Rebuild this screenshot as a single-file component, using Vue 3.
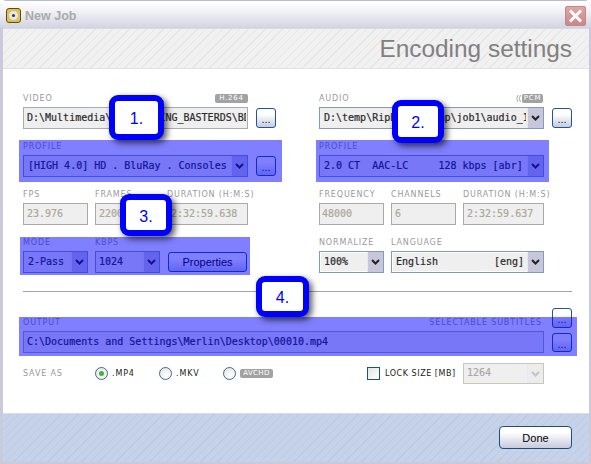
<script setup>
const chevron = 'M1 1 L4.5 4.5 L8 1'
const audioProfile = '2.0 CT  AAC-LC     128 kbps [abr]'
</script>

<template>
  <div class="window">
    <header class="titlebar">
      <svg class="app-icon" width="15" height="15" viewBox="0 0 15 15">
        <rect x="0.5" y="0.5" width="14" height="14" rx="2.5" fill="#e8c52e" stroke="#5a4a20" />
        <circle cx="7.5" cy="7.5" r="5" fill="#e6e6e6" stroke="#a8a8a8" stroke-width="0.6" />
        <circle cx="7.5" cy="7.5" r="1.5" fill="#3a3a3a" />
      </svg>
      <span class="title">New Job</span>
      <button class="close" aria-label="Close">
        <svg width="15" height="14" viewBox="0 0 15 14">
          <path d="M2 1.5 L13 12.5 M13 1.5 L2 12.5" stroke="#fff" stroke-width="3" fill="none" />
        </svg>
      </button>
    </header>

    <div class="heading hatch"><h1>Encoding settings</h1></div>

    <main class="body">
      <div class="cols">
        <section class="col">
          <div class="group">
            <div class="label-row">
              <span class="lbl">VIDEO</span>
              <span class="badge b-h264">H.264</span>
            </div>
            <div class="with-btn">
              <div class="field"><span class="val">D:\Multimedia\Movies\_ING_BASTERDS\BDMV\STREAM</span></div>
              <button class="more">...</button>
            </div>
          </div>
          <div class="group">
            <div class="label-row"><span class="lbl">PROFILE</span></div>
            <div class="with-btn">
              <div class="field select">
                <span class="val sel-val">[HIGH 4.0] HD . BluRay . Consoles</span>
                <span class="arrow"><svg width="9" height="6" viewBox="0 0 9 6"><path :d="chevron" /></svg></span>
              </div>
              <button class="more">...</button>
            </div>
          </div>
          <div class="group triple">
            <div><div class="label-row"><span class="lbl">FPS</span></div><div class="field off"><span class="val">23.976</span></div></div>
            <div><div class="label-row"><span class="lbl">FRAMES</span></div><div class="field off"><span class="val">220080</span></div></div>
            <div><div class="label-row"><span class="lbl">DURATION (H:M:S)</span></div><div class="field off"><span class="val">2:32:59.638</span></div></div>
          </div>
          <div class="group triple">
            <div>
              <div class="label-row"><span class="lbl">MODE</span></div>
              <div class="field select">
                <span class="val sel-val">2-Pass</span>
                <span class="arrow"><svg width="9" height="6" viewBox="0 0 9 6"><path :d="chevron" /></svg></span>
              </div>
            </div>
            <div>
              <div class="label-row"><span class="lbl">KBPS</span></div>
              <div class="field select">
                <span class="val">1024</span>
                <span class="arrow"><svg width="9" height="6" viewBox="0 0 9 6"><path :d="chevron" /></svg></span>
              </div>
            </div>
            <div class="props-cell"><button class="props">Properties</button></div>
          </div>
        </section>

        <section class="col">
          <div class="group">
            <div class="label-row">
              <span class="lbl">AUDIO</span>
              <span class="pcm">
                <svg width="6" height="9" viewBox="0 0 6 9"><path d="M3 1 Q0.5 4.5 3 8 M5.5 1 Q3 4.5 5.5 8" fill="none" stroke="#aaa" stroke-width="1" /></svg>
                <span class="badge b-pcm">PCM</span>
              </span>
            </div>
            <div class="with-btn">
              <div class="field select">
                <span class="val sel-val">D:\temp\RipBot264temp\job1\audio_1.mp4</span>
                <span class="arrow"><svg width="9" height="6" viewBox="0 0 9 6"><path :d="chevron" /></svg></span>
              </div>
              <button class="more">...</button>
            </div>
          </div>
          <div class="group">
            <div class="label-row"><span class="lbl">PROFILE</span></div>
            <div class="field select wide">
              <span class="val sel-val">{{ audioProfile }}</span>
              <span class="arrow"><svg width="9" height="6" viewBox="0 0 9 6"><path :d="chevron" /></svg></span>
            </div>
          </div>
          <div class="group triple">
            <div><div class="label-row"><span class="lbl">FREQUENCY</span></div><div class="field off"><span class="val tight">48000</span></div></div>
            <div><div class="label-row"><span class="lbl">CHANNELS</span></div><div class="field off"><span class="val">6</span></div></div>
            <div><div class="label-row"><span class="lbl">DURATION (H:M:S)</span></div><div class="field off"><span class="val">2:32:59.637</span></div></div>
          </div>
          <div class="group lang-row">
            <div>
              <div class="label-row"><span class="lbl">NORMALIZE</span></div>
              <div class="field select live">
                <span class="val sel-val">100%</span>
                <span class="arrow"><svg width="9" height="6" viewBox="0 0 9 6"><path :d="chevron" /></svg></span>
              </div>
            </div>
            <div>
              <div class="label-row"><span class="lbl">LANGUAGE</span></div>
              <div class="field select live">
                <span class="val sel-val split"><span>English</span><span>[eng]</span></span>
                <span class="arrow"><svg width="9" height="6" viewBox="0 0 9 6"><path :d="chevron" /></svg></span>
              </div>
            </div>
          </div>
        </section>
      </div>

      <hr class="rule" />

      <div class="output">
        <div class="out-labels">
          <span class="lbl">OUTPUT</span>
          <span class="lbl">SELECTABLE SUBTITLES</span>
        </div>
        <button class="more out-top">...</button>
        <div class="field"><span class="val">C:\Documents and Settings\Merlin\Desktop\00010.mp4</span></div>
        <button class="more">...</button>
      </div>

      <div class="save-row">
        <span class="lbl save-lbl">SAVE AS</span>
        <label class="radio-item"><span class="radio on"></span><span class="lbl dark">.MP4</span></label>
        <label class="radio-item"><span class="radio"></span><span class="lbl dark">.MKV</span></label>
        <label class="radio-item"><span class="radio"></span><span class="badge b-avchd">AVCHD</span></label>
        <div class="lock">
          <span class="check"></span>
          <span class="lbl dark lock-lbl">LOCK SIZE [MB]</span>
          <div class="field select dis">
            <span class="val">1264</span>
            <span class="arrow"><svg width="9" height="6" viewBox="0 0 9 6"><path :d="chevron" /></svg></span>
          </div>
        </div>
      </div>
    </main>

    <footer class="footer hatch-blue">
      <button class="done">Done</button>
    </footer>

    <div class="hl hl-a"></div>
    <div class="hl hl-b"></div>
    <div class="hl hl-c"></div>
    <div class="hl hl-d"></div>

    <div class="call c1">1.</div>
    <div class="call c2">2.</div>
    <div class="call c3">3.</div>
    <div class="call c4">4.</div>
  </div>
</template>

<style>
html, body { margin: 0; background: #fff; }
</style>

<style scoped>
.window {
  position: relative;
  width: 591px;
  height: 464px;
  box-sizing: border-box;
  padding: 0 2px 2px 0;
  display: flex;
  flex-direction: column;
  background: #c9cbdc;
  border-radius: 7px 7px 0 0;
  overflow: hidden;
  font-family: "Liberation Sans", Arial, sans-serif;
}
.titlebar {
  height: 28px;
  margin-right: -2px;
  box-sizing: border-box;
  border-top: 1px solid #b9bcd0;
  display: flex;
  align-items: center;
  padding: 2px 5px 0 6px;
  background: linear-gradient(#ffffff 0%, #f3f3f7 35%, #d2d3e1 100%);
  flex: none;
}
.app-icon { flex: none; }
.title {
  margin-left: 4px;
  font-size: 12.5px;
  font-weight: 700;
  color: #aaaaaa;
}
.close {
  margin-left: auto;
  width: 21px;
  height: 20px;
  padding: 0;
  display: flex;
  align-items: center;
  justify-content: center;
  border: 1px solid #b98a8a;
  border-radius: 2px;
  background: linear-gradient(#e2a5a5, #cf8686);
}
.heading {
  height: 41px;
  margin-left: 3px;
  box-sizing: border-box;
  border-bottom: 1px solid #e2e2e2;
  border-top: 1px solid #d8d9e4;
  display: flex;
  align-items: center;
  justify-content: flex-end;
  padding-right: 17px;
  flex: none;
}
.hatch { background: repeating-linear-gradient(135deg, #f1f1f1 0 5px, #e6e6e6 5px 6px); }
.heading h1 {
  margin: 0;
  font-size: 24.4px;
  font-weight: 400;
  color: #808080;
}
.body {
  height: 344px;
  margin-left: 3px;
  box-sizing: border-box;
  background: #fff;
  padding: 22px 17px 0 20px;
  flex: none;
}
.cols {
  display: grid;
  grid-template-columns: 253px 253px;
  column-gap: 43px;
}
.group { margin-bottom: 10px; }
.group:last-child { margin-bottom: 0; }
.label-row {
  height: 16px;
  display: flex;
  align-items: center;
  justify-content: space-between;
  padding-bottom: 2px;
  box-sizing: border-box;
}
.lbl {
  font-family: "DejaVu Sans", sans-serif;
  font-size: 8px;
  line-height: 9px;
  letter-spacing: 0.85px;
  color: #9a9a9a;
  white-space: nowrap;
}
.lbl.dark { color: #222; }
.badge {
  font-family: "DejaVu Sans", sans-serif;
  font-size: 7px;
  line-height: 9px;
  letter-spacing: 0.8px;
  color: #fff;
  background: #a2a2a2;
  border-radius: 2px;
  text-align: center;
  display: inline-block;
}
.b-h264 { width: 33px; height: 9px; margin-right: 28px; }
.pcm { display: flex; align-items: center; gap: 1px; margin-right: 29px; }
.b-pcm { width: 21px; height: 9px; }
.b-avchd { width: 33px; height: 9px; letter-spacing: 0.4px; }
.with-btn {
  display: grid;
  grid-template-columns: 225px 20px;
  column-gap: 8px;
  align-items: center;
}
.field {
  position: relative;
  height: 22px;
  box-sizing: border-box;
  border: 1px solid #a3aeb8;
  background: #efefef;
  display: flex;
  align-items: center;
  overflow: hidden;
  font-family: "DejaVu Sans Mono", monospace;
  font-size: 10px;
  color: #2a2a2a;
  -webkit-text-stroke: 0.2px currentColor;
}
.val {
  flex: 1;
  min-width: 0;
  overflow: hidden;
  white-space: pre;
  line-height: 15px;
  padding-left: 3px;
  padding-bottom: 2px;
  margin-right: 1px;
}
.sel-val { padding-left: 4px; }
.tight { padding-left: 2px; }
.select { border-color: #7f9db9; }
.wide { width: 225px; }
.live { box-shadow: inset 0 0 0 1px #fff; }
.arrow {
  flex: none;
  width: 16px;
  height: 20px;
  box-sizing: border-box;
  display: flex;
  align-items: center;
  justify-content: center;
  background: #c6c7da;
  border-left: 1px solid #e8e8ee;
}
.arrow svg path { fill: none; stroke: #222; stroke-width: 2; }
.off {
  border-color: #a9a9a9;
  color: #aca899;
}
.more {
  width: 20px;
  height: 20px;
  padding: 0;
  box-sizing: border-box;
  border: 1px solid #1f5590;
  border-radius: 3px;
  background: linear-gradient(#ffffff 30%, #c5cbe0 100%);
  font-family: "Liberation Sans", sans-serif;
  font-size: 11px;
  line-height: 20px;
  color: #222;
}
.triple {
  display: grid;
  grid-template-columns: 65px 65px 81px;
  column-gap: 7px;
  width: 225px;
}
.lang-row {
  display: grid;
  grid-template-columns: 65px 153px;
  column-gap: 7px;
  width: 225px;
}
.split { display: flex; justify-content: space-between; padding-right: 2px; }
.props-cell { padding-top: 17px; }
.props {
  display: block;
  width: 79px;
  height: 20px;
  margin-left: 1px;
  padding: 0;
  box-sizing: border-box;
  border: 1px solid #1f5590;
  border-radius: 3px;
  background: linear-gradient(#ffffff 30%, #c5cbe0 100%);
  font-family: "Liberation Sans", sans-serif;
  font-size: 11px;
  color: #000;
}
.rule {
  margin: 18px 0 0;
  height: 1px;
  border: 0;
  background: #a3a3a3;
}
.output {
  margin-top: 16px;
  display: grid;
  grid-template-columns: 521px 20px;
  grid-template-rows: 23px 22px;
  column-gap: 8px;
  align-items: start;
}
.out-labels {
  height: 23px;
  display: flex;
  justify-content: space-between;
  align-items: flex-end;
  padding: 0 2px 4px 0;
  box-sizing: border-box;
}
.out-top { margin-top: 0; }
.output .more:last-child { margin-top: 2px; height: 19px; }
.save-row {
  margin-top: 10px;
  height: 21px;
  display: flex;
  align-items: center;
  padding-right: 28px;
}
.save-lbl { width: 72px; flex: none; }
.radio-item {
  width: 64px;
  flex: none;
  display: flex;
  align-items: center;
  gap: 4px;
}
.radio {
  width: 13px;
  height: 13px;
  box-sizing: border-box;
  border: 1px solid #3b6e99;
  border-radius: 50%;
  background: radial-gradient(circle at 60% 65%, #ffffff 0, #e4e4dc 90%);
  position: relative;
  flex: none;
}
.radio.on::after {
  content: "";
  position: absolute;
  left: 3px;
  top: 3px;
  width: 5px;
  height: 5px;
  border-radius: 50%;
  background: #3fb23f;
}
.lock {
  margin-left: auto;
  display: flex;
  align-items: center;
}
.check {
  width: 13px;
  height: 13px;
  box-sizing: border-box;
  border: 1px solid #1c5180;
  background: linear-gradient(135deg, #e6e6de, #fff);
  margin-right: 5px;
}
.lock-lbl { width: 78px; letter-spacing: 0.55px; }
.dis {
  width: 81px;
  height: 21px;
  border-color: #c9c7ba;
  color: #a8a8a8;
}
.dis .arrow { height: 19px; background: #ececec; }
.dis .arrow svg path { stroke: #c4c4c4; }
.footer {
  height: 49px;
  margin-left: 3px;
  box-sizing: border-box;
  border-top: 1px solid #d9deea;
  padding: 12px 17px 0 0;
  display: flex;
  justify-content: flex-end;
  align-items: flex-start;
  flex: none;
}
.hatch-blue { background: repeating-linear-gradient(135deg, #c6d2e9 0 5px, #bccae3 5px 6px); }
.done {
  width: 73px;
  height: 23px;
  padding: 0;
  box-sizing: border-box;
  border: 1px solid #1b4f7c;
  border-radius: 4px;
  background: linear-gradient(#ffffff 25%, #c8cadc 100%);
  font-family: "Liberation Sans", sans-serif;
  font-size: 11px;
  color: #000;
}
.hl {
  position: absolute;
  background: rgba(0, 0, 255, 0.5);
}
.hl-a { left: 19px; top: 140px; width: 263px; height: 42px; }
.hl-b { left: 316px; top: 140px; width: 233px; height: 42px; }
.hl-c { left: 20px; top: 237px; width: 230px; height: 38px; }
.hl-d { left: 19px; top: 317px; width: 558px; height: 39px; }
.call {
  position: absolute;
  box-sizing: border-box;
  border: 6px solid #0000ff;
  border-radius: 9px;
  background: #fff;
  box-shadow: 3px 3px 6px rgba(0, 0, 0, 0.65);
  color: #0000ff;
  font-family: "Liberation Sans", sans-serif;
  font-size: 16px;
  display: flex;
  align-items: center;
  justify-content: center;
  padding-top: 3px;
}
.c1 { left: 109px; top: 95px; width: 55px; height: 45px; }
.c2 { left: 392px; top: 100px; width: 52px; height: 43px; }
.c3 { left: 120px; top: 194px; width: 52px; height: 42px; }
.c4 { left: 256px; top: 276px; width: 53px; height: 41px; }
</style>
